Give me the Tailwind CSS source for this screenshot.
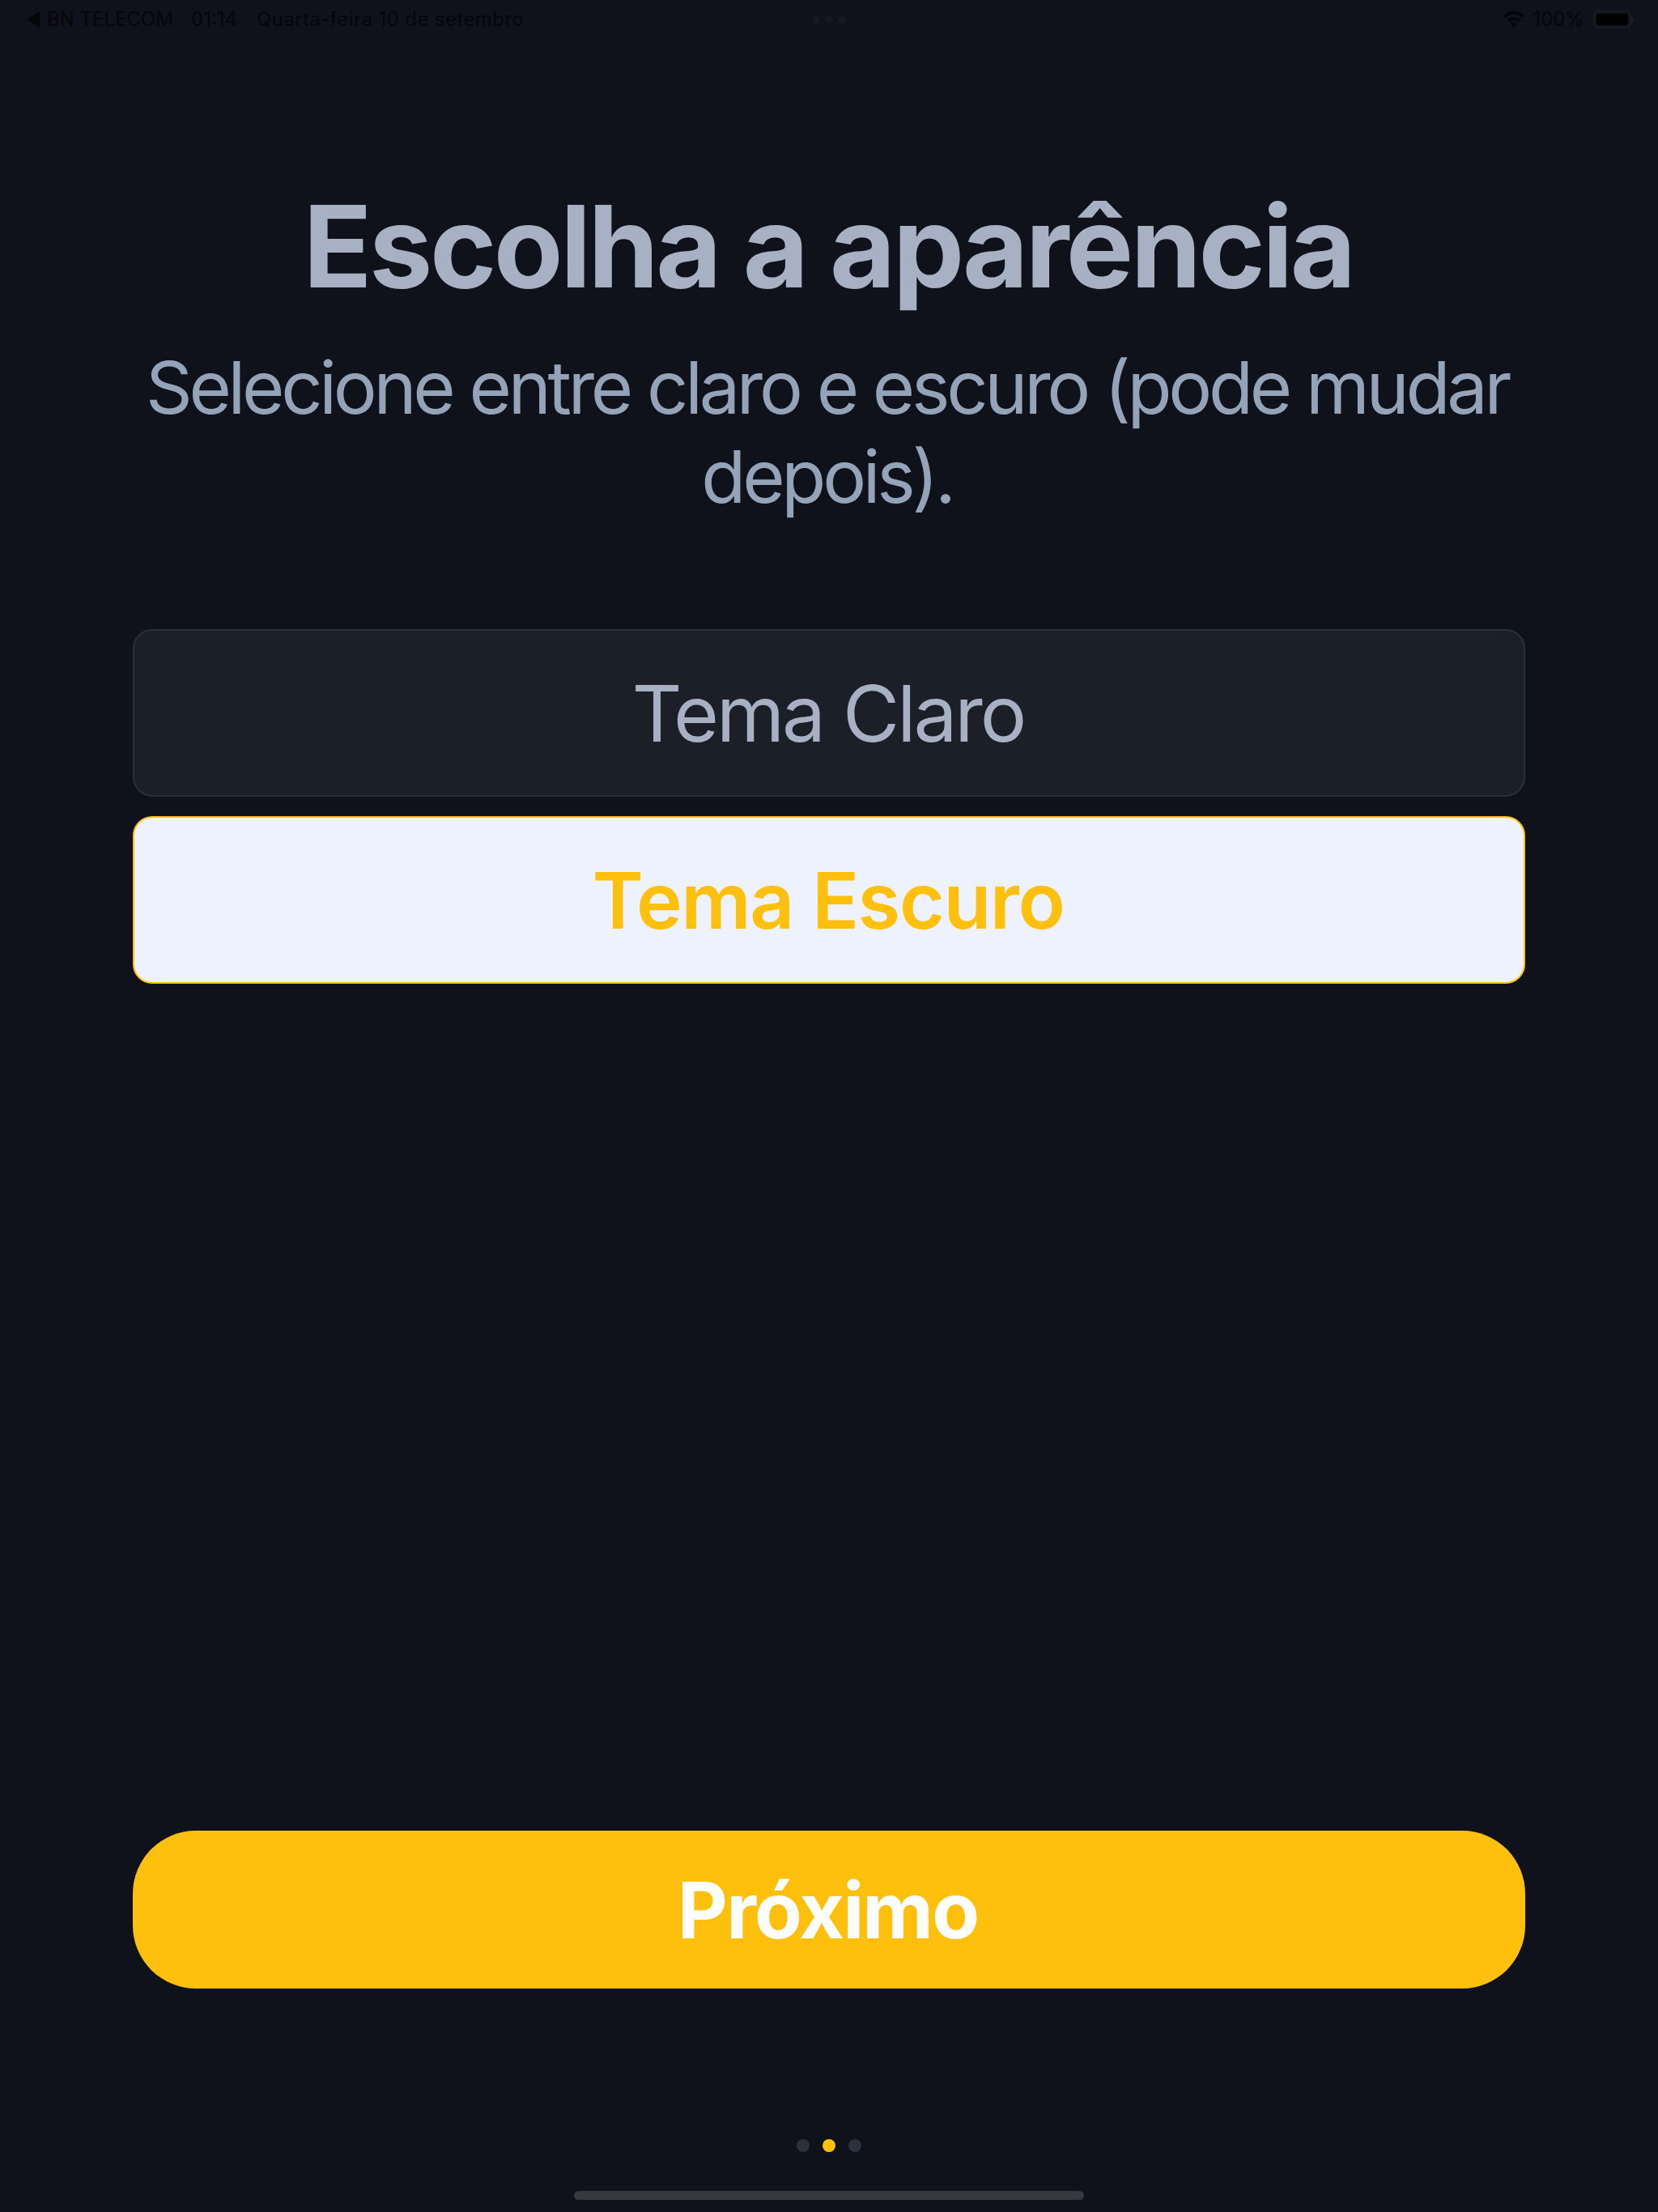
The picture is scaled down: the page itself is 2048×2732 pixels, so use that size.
<!DOCTYPE html>
<html lang="pt">
<head>
    <meta charset="UTF-8">
    <script src="https://cdn.jsdelivr.net/npm/@tailwindcss/browser@4"></script>
    <title>Aparência</title>
</head>
<body class="bg-[#0f121a]">
    <div class="relative flex flex-col w-[2048px] h-[2732px] font-['Inter',sans-serif] [font-variation-settings:'opsz'_32] bg-[#0f121a]">

        <!-- status bar -->
        <div class="relative flex justify-between items-center h-[48px] pl-[33px] pr-[30px] text-[#05060a] text-[24px] [font-variation-settings:normal]">
            <div class="flex items-center">
                <svg width="16" height="20" viewBox="0 0 16 20" class="mr-[9px]"><path d="M0 10 L16 0 V20 Z" fill="#05060a"/></svg>
                <span>BN TELECOM</span>
                <span class="ml-[22px]">01:14</span>
                <span class="ml-[24px] tracking-[0.4px]">Quarta-feira 10 de setembro</span>
            </div>
            <!-- multitasking dots -->
            <div class="absolute left-[1003px] top-[19px] flex gap-[6px]">
                <div class="w-[10px] h-[10px] rounded-full bg-[#15181f]"></div>
                <div class="w-[10px] h-[10px] rounded-full bg-[#15181f]"></div>
                <div class="w-[10px] h-[10px] rounded-full bg-[#15181f]"></div>
            </div>
            <div class="flex items-center">
                <svg width="28" height="22" viewBox="0 0 28 22" fill="none" stroke="#05060a" stroke-width="4" class="mr-[9px]">
                    <path d="M2 8 C9 1 19 1 26 8"/>
                    <path d="M7 13 C11 9 17 9 21 13"/>
                    <path d="M14 21 L9.5 16.5 C12 14.5 16 14.5 18.5 16.5 Z" fill="#05060a" stroke="none"/>
                </svg>
                <span>100%</span>
                <div class="flex items-center ml-[11px]">
                    <div class="w-[47px] h-[22px] p-[2px] rounded-[7px] border-2 border-[#191c23]">
                        <div class="w-full h-full rounded-[3px] bg-black"></div>
                    </div>
                    <div class="w-[3px] h-[8px] rounded-r-sm bg-[#191c23]"></div>
                </div>
            </div>
        </div>

        <!-- heading -->
        <h1 class="mt-[176px] pr-[2px] text-center text-[140px] leading-[160px] tracking-[-3.5px] font-bold text-[#a7b1c3]">Escolha a aparência</h1>
        <p class="mt-[40px] pl-[148px] pr-[153px] text-center text-[90px] leading-[110px] tracking-[-4.3px] text-[#94a3b8]">Selecione entre claro e escuro (pode mudar depois).</p>

        <!-- options -->
        <div class="flex flex-col gap-[24px] mt-[133px] px-[164px]">
            <div class="flex justify-center items-center h-[207px] pr-[2px] rounded-[24px] border-2 border-[#2a303b] bg-[#1b1f27] text-[96px] tracking-[-3px] text-[#a7b1c3]">Tema Claro</div>
            <div class="flex justify-center items-center h-[207px] pr-[2px] rounded-[24px] border-2 border-[#ffc00d] bg-[#edf2fe] text-[96px] tracking-[-1.4px] font-semibold text-[#ffc00d]">Tema Escuro</div>
        </div>

        <!-- next button -->
        <div class="flex-1"></div>
        <div class="mx-[164px] flex justify-center items-center h-[195px] pr-[3px] rounded-[78px] bg-[#ffc00d] text-[96px] tracking-[-1.8px] font-bold text-white">Próximo</div>

        <!-- pager -->
        <div class="flex justify-center gap-[16px] mt-[186px]">
            <div class="w-[16px] h-[16px] rounded-full bg-[#2b323e]"></div>
            <div class="w-[16px] h-[16px] rounded-full bg-[#ffc00d]"></div>
            <div class="w-[16px] h-[16px] rounded-full bg-[#2b323e]"></div>
        </div>

        <!-- home indicator -->
        <div class="self-center w-[630px] h-[11px] mt-[48px] mb-[15px] rounded-full bg-[#38393c]"></div>
    </div>
</body>
</html>
